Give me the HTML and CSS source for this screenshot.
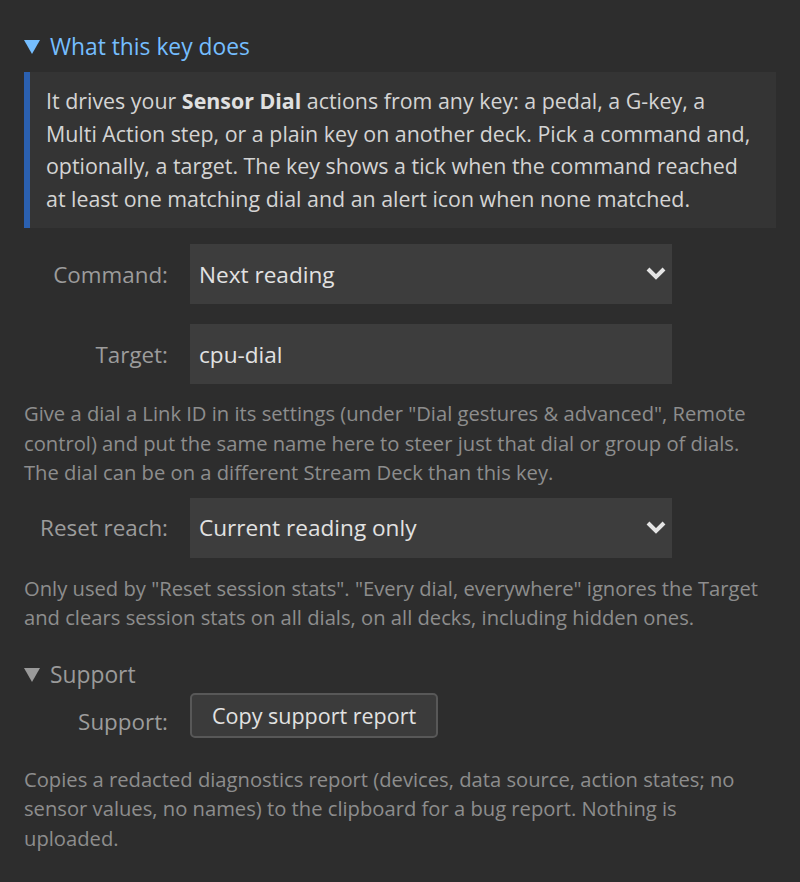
FILE: index.html
```html
<!DOCTYPE html>
<html lang="en">
<head>
<meta charset="utf-8">
<title>Sensor Dial remote</title>
<link rel="stylesheet" href="styles.css">
</head>
<body>
<section class="group">
  <div class="summary summary-main">
    <svg class="tri" width="16" height="14" viewBox="0 0 16 14"><polygon points="0,0 16,0 8,14" fill="currentColor"/></svg>
    <span>What this key does</span>
  </div>
  <div class="info">
    It drives your <b>Sensor Dial</b> actions from any key: a pedal, a G-key, a<br>
    Multi Action step, or a plain key on another deck. Pick a command and,<br>
    optionally, a target. The key shows a tick when the command reached<br>
    at least one matching dial and an alert icon when none matched.
  </div>

  <div class="row row-command">
    <label class="label">Command:</label>
    <div class="select">
      <span>Next reading</span>
      <svg class="chev" width="20" height="14" viewBox="0 0 20 14"><polyline points="2,2 10,10 18,2" fill="none" stroke="currentColor" stroke-width="4"/></svg>
    </div>
  </div>

  <div class="row row-target">
    <label class="label">Target:</label>
    <div class="input">cpu-dial</div>
  </div>

  <p class="help help-target">Give a dial a Link ID in its settings (under "Dial gestures &amp; advanced", Remote control) and put the same name here to steer just that dial or group of dials. The dial can be on a different Stream Deck than this key.</p>

  <div class="row row-reset">
    <label class="label">Reset reach:</label>
    <div class="select">
      <span>Current reading only</span>
      <svg class="chev" width="20" height="14" viewBox="0 0 20 14"><polyline points="2,2 10,10 18,2" fill="none" stroke="currentColor" stroke-width="4"/></svg>
    </div>
  </div>

  <p class="help help-reset">Only used by "Reset session stats". "Every dial, everywhere" ignores the Target and clears session stats on all dials, on all decks, including hidden ones.</p>
</section>

<section class="group">
  <div class="summary summary-support">
    <svg class="tri" width="16" height="14" viewBox="0 0 16 14"><polygon points="0,0 16,0 8,14" fill="currentColor"/></svg>
    <span>Support</span>
  </div>
  <div class="row row-support">
    <label class="label">Support:</label>
    <button class="btn" type="button">Copy support report</button>
  </div>
  <p class="help help-support">Copies a redacted diagnostics report (devices, data source, action states; no sensor values, no names) to the clipboard for a bug report. Nothing is uploaded.</p>
</section>
</body>
</html>
```

FILE: styles.css
```css
html, body {
  margin: 0;
  padding: 0;
  background: #2d2d2d;
}
body {
  padding: 31px 24px 0 24px;
  font-family: "Open Sans", "Noto Sans", "DejaVu Sans", sans-serif;
  color: #d8d8d8;
}
.summary {
  display: flex;
  align-items: center;
  gap: 10px;
  height: 30px;
  font-size: 22.8px;
}
.summary-main {
  color: #75beff;
  margin-bottom: 11px;
}
.summary-support {
  color: #9a9a9a;
  margin-top: 27px;
}
.tri {
  flex: none;
  margin-top: 1px;
}
.info {
  background: #343434;
  border-left: 6px solid #2b60b0;
  padding: 13px 4px 13px 16px;
  font-size: 21.4px;
  line-height: 32.5px;
  color: #d4d4d4;
  white-space: nowrap;
}
.info b {
  font-weight: 700;
  color: #e0e0e0;
}
.row {
  display: grid;
  grid-template-columns: 144px 482px;
  column-gap: 22px;
  align-items: center;
}
.row-command { margin-top: 16px; }
.row-target { margin-top: 20px; }
.row-reset { margin-top: 10px; }
.row-support { margin-top: 3px; }
.label {
  text-align: right;
  font-size: 22.4px;
  color: #9c9c9c;
}
.row-support .label {
  align-self: end;
  margin-bottom: 1px;
}
.select, .input {
  height: 60px;
  background: #3d3d3d;
  display: flex;
  align-items: center;
  padding: 0 6px 0 9px;
  font-size: 22.6px;
  color: #e2e2e2;
  box-sizing: border-box;
}
.select {
  justify-content: space-between;
}
.chev {
  color: #e4e4e4;
  flex: none;
}
.help {
  margin: 0;
  padding-right: 6px;
  font-size: 20.2px;
  line-height: 29.5px;
  color: #8d8d8d;
}
.help-target { margin-top: 15px; }
.help-reset { margin-top: 16px; }
.help-support { margin-top: 27px; }
.btn {
  justify-self: start;
  height: 45px;
  padding: 0 20px;
  background: #3b3b3b;
  border: 2px solid #585858;
  border-radius: 5px;
  font-family: inherit;
  font-size: 21.5px;
  color: #e2e2e2;
}
```
